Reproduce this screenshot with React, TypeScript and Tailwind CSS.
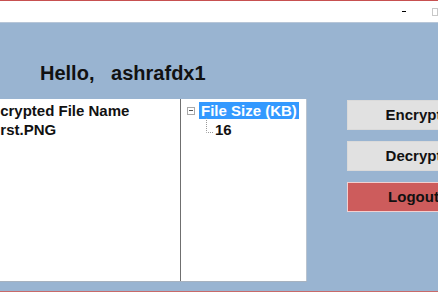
const buttons = [
  { label: "Encrypt", className: "bg-[#e1e1e1] border-[#dadada]" },
  { label: "Decrypt", className: "bg-[#e1e1e1] border-[#dadada]" },
  { label: "Logout", className: "bg-[#cd5c5c] border-[#f2d0d0]" },
];

const App = () => {
  return (
    <div className="w-[438px] h-[292px] overflow-hidden flex flex-col bg-[#99b4d1] border-b border-[#c86a6a] font-['Liberation_Sans',Arial,sans-serif] text-[#111]">
      {/* title bar */}
      <div className="h-[23px] shrink-0 bg-white border-t border-[#c75050] border-b border-b-[#b7c6d8] flex items-center">
        <div className="ml-[402px] w-[7px] h-[1px] bg-black" />
        <div className="ml-[26px] w-[8px] h-[8px] border border-[#c8c8c8]" />
      </div>

      <div className="flex-1 flex flex-col pt-[39px]">
        <div className="pl-[40px] text-[20px] leading-[23px] font-bold whitespace-pre">
          {"Hello,   ashrafdx1"}
        </div>

        <div className="mt-[14px] flex items-start">
          <div className="flex h-[183px] bg-white border-b border-[#a7b2bf]">
            {/* file list */}
            <div className="w-[181px] border-r border-[#6f6f6f] pt-[2px] text-[15px] leading-[19px] font-bold overflow-hidden whitespace-nowrap">
              <div className="ml-[-19px]">Encrypted File Name</div>
              <div className="ml-[-13px]">First.PNG</div>
            </div>

            {/* size tree */}
            <div className="w-[126px] border-r border-[#b9c3cf] pt-[3px] text-[15px] leading-[17px] font-bold whitespace-nowrap">
              <div className="flex items-center pl-[6px]">
                <div className="w-[8px] h-[8px] border border-[#a9a9a9] flex items-center justify-center">
                  <div className="w-[4px] h-[1px] bg-[#555]" />
                </div>
                <span className="ml-[4px] px-[2px] bg-[#3399ff] text-white">File Size (KB)</span>
              </div>
              <div className="flex mt-[2px] pl-[24px]">
                <svg width="9" height="17" className="overflow-visible">
                  <path d="M1.5 -3 V11.5 H9" fill="none" stroke="#9a9a9a" strokeWidth="1" strokeDasharray="1 1" />
                </svg>
                <span className="ml-[1px]">16</span>
              </div>
            </div>
          </div>

          <div className="ml-[40px] mt-[1px] w-[133px] shrink-0 flex flex-col gap-[11px]">
            {buttons.map((b) => (
              <div
                key={b.label}
                className={`h-[30px] border flex items-center justify-center text-[15px] font-bold ${b.className}`}
              >
                {b.label}
              </div>
            ))}
          </div>
        </div>
      </div>
    </div>
  );
};

export default App;
